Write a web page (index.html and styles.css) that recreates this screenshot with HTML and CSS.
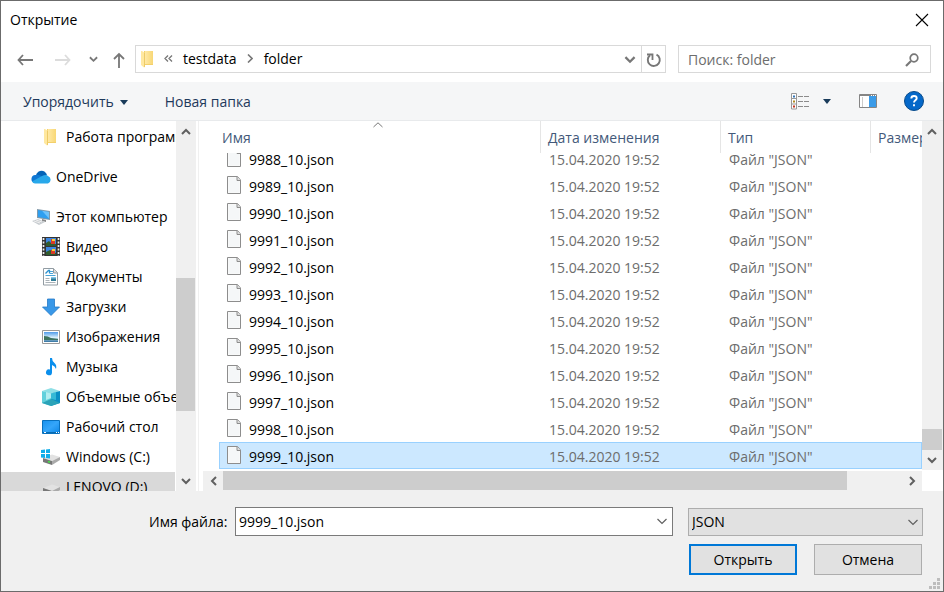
FILE: index.html
```html
<!DOCTYPE html>
<html lang="ru">
<head>
<meta charset="utf-8">
<title>Открытие</title>
<link rel="stylesheet" href="styles.css">
</head>
<body>
<svg class="sprite" aria-hidden="true">
  <defs>
    <linearGradient id="folder-fill" x1="0" y1="0" x2="1" y2="0"><stop offset="0" stop-color="#ffe9a6"/><stop offset="1" stop-color="#f8d775"/></linearGradient>
    <linearGradient id="sky" x1="0" y1="0" x2="0" y2="1"><stop offset="0" stop-color="#4f9bea"/><stop offset=".55" stop-color="#d9effb"/><stop offset="1" stop-color="#2d6f9e"/></linearGradient>
    <linearGradient id="screen" x1="0" y1="0" x2="1" y2="1"><stop offset="0" stop-color="#1691ee"/><stop offset=".5" stop-color="#35a6fa"/><stop offset="1" stop-color="#0c86e6"/></linearGradient>
    <symbol id="up" viewBox="0 0 10 7"><path d="M1 6l4-4 4 4" fill="none" stroke="currentColor" stroke-width="2"/></symbol>
    <symbol id="down" viewBox="0 0 10 7"><path d="M1 1l4 4 4-4" fill="none" stroke="currentColor" stroke-width="2"/></symbol>
    <symbol id="thin-down" viewBox="0 0 10 7"><path d="M.5 1L5 5.500l4.500-4.500" fill="none" stroke="currentColor" stroke-width="1.200"/></symbol>
    <symbol id="folder" viewBox="0 0 14 18"><path d="M4 1h9v14H4z" fill="#f3d06b"/><path d="M5 1h8v13H5z" fill="url(#folder-fill)"/><path d="M1 1h1l3 2v14l-1 .5L1 15z" fill="#ffe8a0"/><path d="M4.500 3v14" stroke="#e9c35a" stroke-width=".8"/></symbol>
    <symbol id="file" viewBox="0 0 16 20"><path d="M1.500 1.500h10l3 3.500v13.500h-13z" fill="#fafbfb" stroke="#8d8d8d"/><path d="M2.500 2.500h8v3.500h3v11.500h-11z" fill="#f5f7f8"/><path d="M11 1.500v4h3.500" fill="#ddd" stroke="#8d8d8d"/></symbol>
    <symbol id="disk" viewBox="0 0 20 18"><path d="M2 10l9-3.500 8 2.500-8 4z" fill="#e2e2e2"/><path d="M2 10l9 3v4l-9-3z" fill="#777"/><path d="M11 13l8-4v3l-8 5z" fill="#aaa"/></symbol>
  </defs>
</svg>
<main class="dialog">
  <header class="title-bar">
    <h1>Открытие</h1>
    <button class="icon-button close" aria-label="Закрыть"><svg width="14" height="14" viewBox="0 0 14 14"><path d="M1 1l12 12M13 1L1 13" stroke="#000" stroke-width="1.100"/></svg></button>
  </header>

  <nav class="address-row" aria-label="Адрес">
    <button class="icon-button back" aria-label="Назад"><svg width="16" height="12" viewBox="0 0 16 12"><path d="M6 1L1.500 6 6 11M1.500 6H16" fill="none" stroke="#777" stroke-width="1.800"/></svg></button>
    <button class="icon-button forward" aria-label="Вперед"><svg width="16" height="12" viewBox="0 0 16 12"><path d="M10 1l4.500 5L10 11M14.500 6H0" fill="none" stroke="#dcdcdc" stroke-width="1.800"/></svg></button>
    <button class="icon-button recent" aria-label="Последние"><svg width="9" height="7"><use href="#down"/></svg></button>
    <button class="icon-button level-up" aria-label="Вверх"><svg width="12" height="16" viewBox="0 0 12 16"><path d="M1 7l5-5 5 5M6 2v14" fill="none" stroke="#777" stroke-width="1.800"/></svg></button>
    <div class="address">
      <svg class="address-icon" width="14" height="18"><use href="#folder"/></svg>
      <svg class="overflow" width="9" height="7" viewBox="0 0 9 7"><path d="M4 .5L1 3.500l3 3M8 .5L5 3.500l3 3" fill="none" stroke="#777" stroke-width="1.300"/></svg>
      <a href="#testdata">testdata</a>
      <svg class="crumb-arrow" width="6" height="9" viewBox="0 0 6 9"><path d="M1 .5l4 4-4 4" fill="none" stroke="#777" stroke-width="1.600"/></svg>
      <a href="#folder-path">folder</a>
      <button class="icon-button history" aria-label="Журнал"><svg width="12" height="8"><use href="#down"/></svg></button>
      <button class="icon-button refresh" aria-label="Обновить"><svg width="16" height="16" viewBox="0 0 16 16"><path d="M10.500 2.600a6 6 0 1 1-6.500.7" fill="none" stroke="#777" stroke-width="1.900"/><path d="M1 2.500h5.500V8" fill="none" stroke="#777" stroke-width="1.800"/></svg></button>
    </div>
    <div class="search">
      <input type="search" aria-label="Поиск" placeholder="Поиск: folder">
      <svg width="14" height="14" viewBox="0 0 14 14"><circle cx="9" cy="5" r="3.800" fill="none" stroke="#777" stroke-width="1.700"/><path d="M6 8l-5 5" stroke="#777" stroke-width="2.200"/></svg>
    </div>
  </nav>

  <div class="toolbar">
    <button class="command">Упорядочить <svg width="8" height="5" viewBox="0 0 8 5"><path d="M0 0h8L4 5z" fill="#193b5a"/></svg></button>
    <button class="command">Новая папка</button>
    <div class="tools">
      <button class="icon-button" aria-label="Вид"><svg width="19" height="17" viewBox="0 0 19 17"><path d="M.5 .5h5v15.500h-5zM.5 5.500h5M.5 11h5" fill="#fff" stroke="#999"/><path d="M2 2.500h2v2H2z" fill="#3475b5"/><path d="M2 7.500h2v2H2z" fill="#b08a20"/><path d="M2 12.500h2v2H2z" fill="#c43722"/><path d="M7 3.500h5m1 0h5M7 8.500h5m1 0h5M7 13.500h5m1 0h5" stroke="#8b8b8b"/></svg></button>
      <button class="icon-button view-menu" aria-label="Другие виды"><svg width="8" height="5" viewBox="0 0 8 5"><path d="M0 0h8L4 5z" fill="#193b5a"/></svg></button>
      <button class="icon-button preview" aria-label="Область просмотра"><svg width="18" height="14" viewBox="0 0 18 14"><path d="M.5 .5h17v13H.5z" fill="#fff" stroke="#858585"/><path d="M1 1.500h16" stroke="#858585"/><path d="M3.500 3v10" stroke="#ccc"/><path d="M10 2h7v11h-7z" fill="#3a9be8"/><path d="M12 1.500h1m1 0h1m1 0h1" stroke="#fff"/></svg></button>
      <button class="icon-button help" aria-label="Справка"><svg width="20" height="20" viewBox="0 0 20 20"><circle cx="10" cy="10" r="9.500" fill="#0568c9" stroke="#084b8b"/><path d="M7.300 7.500Q7.300 5 10 5t2.700 2.300c0 2-2.700 2-2.700 4.200M10 13.200v2" fill="none" stroke="#fff" stroke-width="1.900"/></svg></button>
    </div>
  </div>

  <div class="browser">
    <aside class="tree">
      <ul>
        <li class="child"><svg width="20" height="18" viewBox="-2 0 20 18"><use href="#folder" width="14" height="18"/></svg><a href="#work">Работа программы</a></li>
        <li class="root"><svg width="20" height="14" viewBox="0 0 20 14"><path d="M5 5C7-.5 14-1 16 5l-5 4z" fill="#0364b8"/><path d="M4 13a4 4 0 1 1 1-8q4-1 7 3l-6 5z" fill="#0f78d4"/><path d="M11 6q4-2 6 0a4 4 0 0 1 0 7.500H4q-2 0-3-2z" fill="#28a8ea"/></svg><a href="#onedrive">OneDrive</a></li>
        <li class="root"><svg width="20" height="18" viewBox="0 0 20 18"><path d="M6 1l13 2v9L6 10z" fill="#8199aa"/><path d="M7 2l11 2v7L7 9z" fill="#2f9ff0"/><path d="M11 2.700L18 4v6.500z" fill="#6ec2fa"/><path d="M11 11l4 1v2l-4-1z" fill="#888"/><path d="M1 13l6-2 7 3-6 3z" fill="#c7ccd0"/><path d="M3 13l6 2m-4-3l6 2" stroke="#eee"/></svg><a href="#computer">Этот компьютер</a></li>
        <li class="child"><svg width="20" height="20" viewBox="0 0 20 20"><path d="M1 0h18v19H1z" fill="#343434"/><path d="M5 1h10v8H5zM5 10h10v8H5z" fill="#3f87df"/><path d="M5 6l3-2 3 3h4v2H5zM5 15l4-2 6 3v2H5z" fill="#315c2d"/><path d="M10 2h4v5h-4zM10 13h4v4h-4z" fill="#d93a25"/><path d="M11 2h3v2h-3zM11 12h3v2h-3z" fill="#f4cf32"/><path d="M2.500 1v18M17.500 1v18" stroke="#eee" stroke-width="1.700" stroke-dasharray="2 1.500"/></svg><a href="#video">Видео</a></li>
        <li class="child"><svg width="20" height="20" viewBox="0 0 20 20"><path d="M2.500 1.500h10l4 4V18h-14z" fill="#fff" stroke="#929ca3"/><path d="M12.500 1.500V6h4" fill="#ddd" stroke="#929ca3"/><path d="M4.500 6.500l3-3h1v3" fill="none" stroke="#2a91cf" stroke-width="1.300"/><path d="M9 4.500h3M9 6.500h3M4.500 8.500h10" stroke="#4aa5d8"/><path d="M4.500 11.500h4M4.500 13.500h4M4.500 15.500h10" stroke="#aab2b8"/><path d="M10 10h5v4h-5z" fill="#317d98"/><path d="M10 10h5v1.500h-5z" fill="#7fc3e6"/></svg><a href="#documents">Документы</a></li>
        <li class="child"><svg width="20" height="18" viewBox="0 0 20 18"><path d="M6.500 1h7v8h5L10 17.500 1.500 9h5z" fill="#3998e8" stroke="#2579c7" stroke-width=".8"/></svg><a href="#downloads">Загрузки</a></li>
        <li class="child"><svg width="20" height="16" viewBox="0 0 20 16"><path d="M1.500 1.500h17v13h-17z" fill="#fff" stroke="#999"/><path d="M3 3h14v10H3z" fill="url(#sky)"/><path d="M3 7q4 0 7 2l7 1v1H3z" fill="#3e7460"/></svg><a href="#pictures">Изображения</a></li>
        <li class="child"><svg width="20" height="20" viewBox="0 0 20 20"><path d="M9 1h2q0 3 2.500 5t1.500 6q-1-3-4-4v7.500a3 3 0 1 1-2-3z" fill="#0b8fec"/></svg><a href="#music">Музыка</a></li>
        <li class="child"><svg width="20" height="18" viewBox="0 0 20 18"><path d="M1 3l9-3 9 3-9 3z" fill="#8fdfe6"/><path d="M1 3l9 2.500V18l-9-3z" fill="#62d0dc"/><path d="M10 5.500L19 3v12l-9 3z" fill="#0b8fc4"/><path d="M5 4l5 1.500L15 4v7l-5-1-5 2z" fill="#b3edf0"/><path d="M10 5.500L15 4v8l-5-1z" fill="#35b9d6"/><path d="M1 15l9-4 9 4-9 3z" fill="#2ba3b8"/></svg><a href="#objects">Объемные объекты</a></li>
        <li class="child"><svg width="20" height="16" viewBox="0 0 20 16"><path d="M1.500 1.500h17v13h-17z" fill="url(#screen)" stroke="#0870bd"/><path d="M2 13.500h16" stroke="#086bb0"/><path d="M3 13.500h2m10 0h1m1 0h1" stroke="#fff"/></svg><a href="#desktop">Рабочий стол</a></li>
        <li class="child"><svg width="20" height="18" viewBox="0 0 20 18"><use href="#disk"/><path d="M0 2l4-.5V5H0zM5 1.500L9 1v4H5zM0 6h4v4l-4-.5zM5 6h4v4.500L5 10z" fill="#11aeea"/><path d="M7 13.500l2 .7" stroke="#42e547" stroke-width="1.500"/></svg><a href="#drive-c">Windows (C:)</a></li>
        <li class="child selected"><svg width="20" height="18"><use href="#disk"/></svg><a href="#drive-d">LENOVO (D:)</a></li>
      </ul>
    </aside>
    <div class="scroll vertical tree-scroll">
      <button class="icon-button" aria-label="Прокрутить вверх"><svg width="10" height="7"><use href="#up"/></svg></button>
      <div class="track"><div class="before"></div><div class="thumb"></div><div class="after"></div></div>
      <button class="icon-button" aria-label="Прокрутить вниз"><svg width="10" height="7"><use href="#down"/></svg></button>
    </div>
    <div class="divider"></div>
    <section class="files">
      <table>
        <thead><tr><th>Имя<svg class="sort" width="10" height="6" viewBox="0 0 10 6"><path d="M.5 5L5 .8 9.500 5" fill="none" stroke="#777"/></svg></th><th>Дата изменения</th><th>Тип</th><th>Размер</th></tr></thead>
        <tbody>
          <tr><td><svg width="16" height="20"><use href="#file"/></svg>9988_10.json</td><td>15.04.2020 19:52</td><td>Файл "JSON"</td></tr>
          <tr><td><svg width="16" height="20"><use href="#file"/></svg>9989_10.json</td><td>15.04.2020 19:52</td><td>Файл "JSON"</td></tr>
          <tr><td><svg width="16" height="20"><use href="#file"/></svg>9990_10.json</td><td>15.04.2020 19:52</td><td>Файл "JSON"</td></tr>
          <tr><td><svg width="16" height="20"><use href="#file"/></svg>9991_10.json</td><td>15.04.2020 19:52</td><td>Файл "JSON"</td></tr>
          <tr><td><svg width="16" height="20"><use href="#file"/></svg>9992_10.json</td><td>15.04.2020 19:52</td><td>Файл "JSON"</td></tr>
          <tr><td><svg width="16" height="20"><use href="#file"/></svg>9993_10.json</td><td>15.04.2020 19:52</td><td>Файл "JSON"</td></tr>
          <tr><td><svg width="16" height="20"><use href="#file"/></svg>9994_10.json</td><td>15.04.2020 19:52</td><td>Файл "JSON"</td></tr>
          <tr><td><svg width="16" height="20"><use href="#file"/></svg>9995_10.json</td><td>15.04.2020 19:52</td><td>Файл "JSON"</td></tr>
          <tr><td><svg width="16" height="20"><use href="#file"/></svg>9996_10.json</td><td>15.04.2020 19:52</td><td>Файл "JSON"</td></tr>
          <tr><td><svg width="16" height="20"><use href="#file"/></svg>9997_10.json</td><td>15.04.2020 19:52</td><td>Файл "JSON"</td></tr>
          <tr><td><svg width="16" height="20"><use href="#file"/></svg>9998_10.json</td><td>15.04.2020 19:52</td><td>Файл "JSON"</td></tr>
          <tr class="selected"><td><svg width="16" height="20"><use href="#file"/></svg>9999_10.json</td><td>15.04.2020 19:52</td><td>Файл "JSON"</td></tr>
        </tbody>
      </table>
      <div class="scroll vertical file-scroll">
        <button class="icon-button" aria-label="Список вверх"><svg width="10" height="7"><use href="#up"/></svg></button>
        <div class="track"><div class="before"></div><div class="thumb"></div></div>
        <button class="icon-button" aria-label="Список вниз"><svg width="10" height="7"><use href="#down"/></svg></button>
      </div>
      <div class="scroll horizontal">
        <button class="icon-button" aria-label="Список влево"><svg width="7" height="10" viewBox="0 0 7 10"><path d="M6 1L2 5l4 4" fill="none" stroke="currentColor" stroke-width="2"/></svg></button>
        <div class="track"><div class="thumb"></div><div class="after"></div></div>
        <button class="icon-button" aria-label="Список вправо"><svg width="7" height="10" viewBox="0 0 7 10"><path d="M1 1l4 4-4 4" fill="none" stroke="currentColor" stroke-width="2"/></svg></button>
      </div>
    </section>
  </div>

  <form class="footer">
    <div class="fields">
      <label for="filename">Имя файла:</label>
      <div class="combo"><input id="filename" type="text" value="9999_10.json"><button type="button" class="icon-button" aria-label="Список имен"><svg width="10" height="7"><use href="#thin-down"/></svg></button></div>
      <div class="filter"><select aria-label="Тип файлов"><option>JSON</option></select><svg width="10" height="7"><use href="#thin-down"/></svg></div>
    </div>
    <div class="actions"><button type="button" class="action primary">Открыть</button><button type="button" class="action">Отмена</button></div>
    <svg class="grip" width="12" height="12" viewBox="0 0 12 12"><path d="M8 0h3v3H8zM4 4h3v3H4zM8 4h3v3H8zM0 8h3v3H0zM4 8h3v3H4zM8 8h3v3H8z" fill="#bdbdbd"/></svg>
  </form>
</main>
</body>
</html>
```
FILE: styles.css
```css
* { box-sizing: border-box; }
body { margin: 0; font: 14px/20px "Open Sans", "Noto Sans", sans-serif; color: #000; }
button, input, select { font: inherit; color: inherit; }
a { color: inherit; text-decoration: none; }
svg { display: block; flex: none; }
ul { list-style: none; margin: 0; padding: 0; }
.sprite { position: absolute; width: 0; height: 0; }

.dialog { display: flex; flex-direction: column; height: 100vh; border: 1px solid #6b6b6b; background: #fff; overflow: hidden; }
.icon-button { display: flex; align-items: center; justify-content: center; padding: 0; border: 0; background: none; color: #606060; }

.title-bar { display: flex; align-items: center; justify-content: space-between; height: 38px; padding: 0 14px 0 9px; flex: none; }
.title-bar h1 { margin: 0; font-size: 14px; font-weight: 400; }

.address-row { display: flex; align-items: center; flex: none; height: 43px; padding: 4px 12px 8px 16px; }
.address-row .icon-button { padding-top: 2px; color: #777; }
.address-row .forward { margin-left: 22px; }
.address-row .recent { margin-left: 18px; }
.level-up { margin: 0 10px 0 15px; }
.address { display: flex; align-items: center; flex: 1; height: 28px; border: 1px solid #d9d9d9; }
.address-icon { margin: 0 10px 0 4px; }
.overflow { margin-right: 10px; }
.crumb-arrow { margin: 0 11px 0 10px; }
.history { margin-left: auto; width: 23px; }
.refresh { width: 24px; height: 26px; border-left: 1px solid #d9d9d9; }
.address-row .refresh { border-left: 1px solid #d9d9d9; }
.search { display: flex; align-items: center; width: 253px; height: 28px; margin-left: 12px; padding: 2px 11px 0 9px; border: 1px solid #d9d9d9; }
.search input { flex: 1; min-width: 0; padding: 0; border: 0; outline: 0; background: none; appearance: none; }
.search input::placeholder { color: #6d6d6d; opacity: 1; }

.toolbar { display: flex; align-items: center; flex: none; height: 39px; padding: 0 19px 0 22px; gap: 37px; background: #f5f6f7; border-bottom: 1px solid #e8eaec; color: #1e395b; }
.command { display: flex; align-items: center; gap: 6px; padding: 2px 0 0; border: 0; background: none; }
.tools { display: flex; align-items: center; margin-left: auto; }
.view-menu { margin: 0 28px 0 13px; }
.help { margin-left: 27px; }

.browser { display: flex; flex: 1; min-height: 0; }
.tree { width: 175px; flex: none; overflow: hidden; padding-top: 1px; }
.tree li { display: flex; align-items: center; height: 30px; gap: 5px; white-space: nowrap; }
.tree .root { margin-top: 10px; padding-left: 30px; }
.tree .child { padding-left: 40px; }
.tree .selected { width: 174px; background: #d9d9d9; }

.scroll { display: flex; background: #f0f0f0; }
.scroll .icon-button { width: 20px; height: 20px; flex: none; }
.track { display: flex; flex: 1; }
.thumb { background: #cdcdcd; }
.vertical { flex-direction: column; width: 20px; flex: none; }
.vertical .track { flex-direction: column; }
.vertical .thumb { margin-right: 1px; }
.tree-scroll .before { flex: 137; }
.tree-scroll .thumb { flex: 133; }
.tree-scroll .after { flex: 60; }
.file-scroll .before { flex: 1; }
.file-scroll .thumb { height: 21px; }
.horizontal { height: 20px; }
.horizontal .thumb { flex: 625; height: 19px; }
.horizontal .after { flex: 55; }
.divider { width: 5px; margin-left: 2px; flex: none; border-left: 1px solid #f0f0f0; }

.files { display: grid; flex: 1; min-width: 0; grid-template: minmax(0, 1fr) 20px / minmax(0, 1fr) 21px; }
.files table { display: flex; flex-direction: column; min-height: 0; padding: 0 0 2px 16px; }
.files .file-scroll { width: 21px; margin-bottom: 1px; }
thead { display: block; flex: none; }
tbody { display: flex; flex-direction: column; justify-content: flex-end; flex: 1; min-height: 0; overflow: hidden; }
.files tr { display: grid; grid-template-columns: minmax(0, 1fr) 180px 150px 52px; flex: none; height: 27px; }
.files thead tr { height: 32px; }
th { position: relative; display: flex; align-items: center; padding: 2px 0 0 7px; border-left: 1px solid #e5e5e5; font-weight: 400; color: #43597a; overflow: hidden; white-space: nowrap; }
th:first-child { padding-left: 3px; border-left: 0; }
.sort { position: absolute; top: 1px; left: calc(50% - 7px); }
td { display: flex; align-items: center; padding: 2px 0 0 9px; color: #6d6d6d; white-space: nowrap; }
td:first-child { gap: 7px; padding-left: 7px; color: #000; }
td svg { margin-bottom: 4px; }
tbody .selected { background: #cce8ff; box-shadow: inset 0 0 0 1px #99d1ff; }

.footer { position: relative; flex: none; height: 100px; padding: 16px 20px 0 148px; background: #f0f0f0; }
.fields { display: flex; align-items: center; height: 29px; }
.fields label { width: 86px; white-space: nowrap; }
.combo { display: flex; flex: 1; height: 29px; border: 1px solid #7a7a7a; background: #fff; }
.combo input { flex: 1; min-width: 0; padding: 0 3px; border: 0; outline: 0; background: none; }
.combo button { width: 20px; }
.filter { position: relative; width: 235px; height: 28px; margin-left: 15px; }
.filter select { width: 100%; height: 28px; padding: 0 3px; border: 1px solid #adadad; border-radius: 0; background: #e1e1e1; appearance: none; }
.filter svg { position: absolute; top: 11px; right: 5px; color: #606060; pointer-events: none; }
.actions { display: flex; justify-content: flex-end; gap: 17px; margin-top: 8px; padding-right: 1px; }
.action { width: 108px; height: 31px; padding: 0; border: 1px solid #adadad; background: #e1e1e1; }
.primary { border: 2px solid #0078d7; }
.grip { position: absolute; right: 2px; bottom: 1px; }
```
